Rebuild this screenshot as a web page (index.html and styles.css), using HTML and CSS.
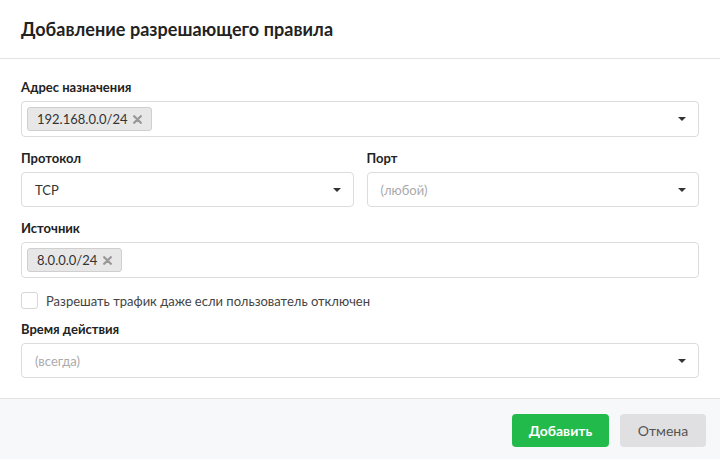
FILE: index.html
```html
<!DOCTYPE html>
<html lang="ru">
<head>
    <meta charset="UTF-8">
    <meta name="viewport" content="width=device-width, initial-scale=1.0">
    <title>Добавление разрешающего правила</title>
    <link rel="stylesheet" href="styles.css">
</head>
<body>
    <div class="modal">
        <div class="modal-header">
            <h1 class="modal-title">Добавление разрешающего правила</h1>
        </div>

        <div class="modal-body">
            <div class="field">
                <label class="field-label">Адрес назначения</label>
                <div class="box tags-box">
                    <span class="tag">192.168.0.0/24
                        <svg class="tag-remove" width="9" height="9" viewBox="0 0 9 9"><path d="M1.2 1.2 L7.8 7.8 M7.8 1.2 L1.2 7.8" stroke="#999" stroke-width="2.3" stroke-linecap="round"/></svg>
                    </span>
                    <span class="caret"></span>
                </div>
            </div>

            <div class="field-row">
                <div class="field">
                    <label class="field-label">Протокол</label>
                    <div class="box select-box">
                        <span class="value">TCP</span>
                        <span class="caret"></span>
                    </div>
                </div>
                <div class="field">
                    <label class="field-label">Порт</label>
                    <div class="box select-box">
                        <span class="placeholder">(любой)</span>
                        <span class="caret"></span>
                    </div>
                </div>
            </div>

            <div class="field">
                <label class="field-label">Источник</label>
                <div class="box tags-box">
                    <span class="tag">8.0.0.0/24
                        <svg class="tag-remove" width="9" height="9" viewBox="0 0 9 9"><path d="M1.2 1.2 L7.8 7.8 M7.8 1.2 L1.2 7.8" stroke="#999" stroke-width="2.3" stroke-linecap="round"/></svg>
                    </span>
                </div>
            </div>

            <label class="check">
                <span class="check-box"></span>
                Разрешать трафик даже если пользователь отключен
            </label>

            <div class="field">
                <label class="field-label">Время действия</label>
                <div class="box select-box">
                    <span class="placeholder">(всегда)</span>
                    <span class="caret"></span>
                </div>
            </div>
        </div>

        <div class="modal-footer">
            <button class="btn btn-green">Добавить</button>
            <button class="btn btn-grey">Отмена</button>
        </div>
    </div>
</body>
</html>
```

FILE: styles.css
```css
body {
    margin: 0;
    font-family: Lato, "Open Sans", sans-serif;
    color: #222;
    background: #fff;
}

.modal {
    width: 720px;
    height: 459px;
    display: flex;
    flex-direction: column;
}

.modal-header {
    height: 58px;
    display: flex;
    align-items: center;
    padding: 0 21px;
    border-bottom: 1px solid #e3e3e3;
}

.modal-title {
    margin: 0;
    font-size: 18px;
    font-weight: 700;
    color: #222;
    letter-spacing: 0.05px;
}

.modal-body {
    padding: 20px 21px 20px 21px;
    display: flex;
    flex-direction: column;
}

.field {
    display: flex;
    flex-direction: column;
    margin-bottom: 13px;
}

.field:last-child {
    margin-bottom: 0;
}

.field-row {
    display: flex;
    gap: 13px;
}

.field-row .field {
    flex: 1;
}

.field-label {
    font-size: 13px;
    line-height: 17px;
    font-weight: 700;
    color: #222;
    margin-bottom: 5px;
}

.box {
    border: 1px solid #dcdcdc;
    border-radius: 4px;
    display: flex;
    align-items: center;
    box-sizing: border-box;
    font-size: 13px;
    color: #333;
}

.select-box {
    height: 35px;
    padding: 0 12px 0 13px;
    justify-content: space-between;
}

.tags-box {
    height: 36px;
    padding: 0 12px 0 5px;
    justify-content: space-between;
}

.placeholder {
    color: #aaa;
}

.caret {
    width: 0;
    height: 0;
    border-left: 4px solid transparent;
    border-right: 4px solid transparent;
    border-top: 4px solid #333;
}

.tag {
    display: inline-flex;
    align-items: center;
    height: 24px;
    box-sizing: border-box;
    padding: 0 9px 0 9px;
    background: #e7e7e7;
    border: 1px solid #cfcfcf;
    border-radius: 3px;
    font-size: 13px;
    color: #333;
}

.tag-remove {
    margin-left: 6px;
}

.check {
    display: flex;
    align-items: center;
    font-size: 13px;
    color: #444;
    margin: 1px 0 12px 0;
    height: 17px;
}

.check-box {
    width: 15px;
    height: 15px;
    border: 1px solid #d6d6d6;
    border-radius: 3px;
    margin-right: 8px;
}

.modal-footer {
    flex: 1;
    background: #f7f8fa;
    border-top: 1px solid #e3e3e3;
    display: flex;
    justify-content: flex-end;
    align-items: flex-start;
    gap: 11px;
    padding: 15px 14px 0 0;
}

.btn {
    height: 33px;
    border: none;
    border-radius: 4px;
    font-family: Lato, "Open Sans", sans-serif;
    font-size: 14px;
    cursor: pointer;
}

.btn-green {
    width: 97px;
    background: #22ba4a;
    color: #fff;
    font-weight: 700;
}

.btn-grey {
    width: 86px;
    background: #e0e0e2;
    color: #555;
}
```
